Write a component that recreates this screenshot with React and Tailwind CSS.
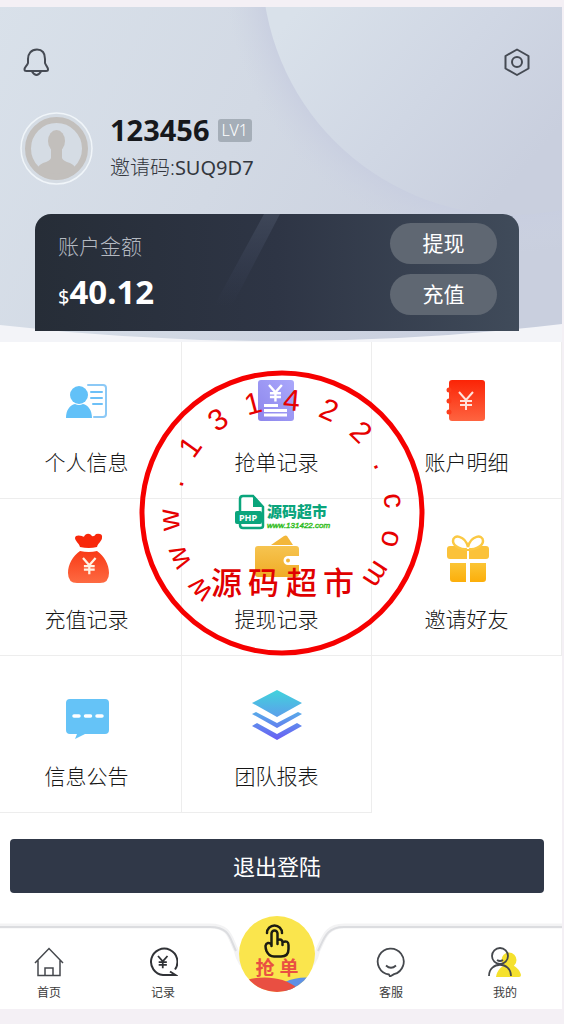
import React from 'react';

const YEN = 'M0 0 L7 8 L14 0 M7 8 V18 M1 9 H13 M1 13 H13';

function ProfileIcon() {
  return (
    <svg viewBox="0 0 52 52" className="size-[52px]" fill="none" aria-hidden="true">
      <g stroke="#8cc9f6" strokeWidth="2" strokeLinecap="round">
        <path d="M27 10H42q3 0 3 3V39q0 3-3 3H33" />
        <path d="M30 17H41M30 23H41M32 29H41" stroke="#6dc0f7" />
      </g>
      <circle cx="18" cy="20" r="9" fill="#62c1f8" />
      <path d="M5 43c0-8 4-13 9-14q4 2 8 0c5 1 9 6 9 14z" fill="#62c1f8" />
    </svg>
  );
}

function OrderIcon() {
  return (
    <svg viewBox="0 0 52 52" className="size-[52px]" fill="none" aria-hidden="true">
      <defs>
        <linearGradient id="order" x1="0" y1="1" x2="1" y2="0">
          <stop offset="0" stopColor="#8d86ec" />
          <stop offset="1" stopColor="#aaa8fb" />
        </linearGradient>
      </defs>
      <rect x="7" y="5" width="36" height="41" rx="3" fill="url(#order)" />
      <path d={YEN} transform="translate(18 10) scale(.92)" stroke="#fff" strokeWidth="2.6" />
      <path d="M13 30.500H27M13 35.500H36M13 40H36" stroke="#fff" strokeWidth="2.800" />
    </svg>
  );
}

function LedgerIcon() {
  return (
    <svg viewBox="0 0 52 52" className="size-[52px]" fill="none" aria-hidden="true">
      <defs>
        <linearGradient id="ledger" x1="0" y1="0" x2="0" y2="1">
          <stop offset="0" stopColor="#fb2406" />
          <stop offset="1" stopColor="#fe6440" />
        </linearGradient>
      </defs>
      <rect x="8" y="5" width="36" height="41" rx="3" fill="url(#ledger)" />
      <g fill="#fc3d1c">
        <circle cx="8" cy="15" r="2.500" />
        <circle cx="8" cy="26" r="2.500" />
        <circle cx="8" cy="37" r="2.500" />
      </g>
      <path d={YEN} transform="translate(18 17)" stroke="#ffe3dc" strokeWidth="2" />
    </svg>
  );
}

function MoneyBagIcon() {
  return (
    <svg viewBox="0 0 52 52" className="size-[52px]" fill="none" aria-hidden="true">
      <defs>
        <linearGradient id="bag" x1="0" y1="0" x2="0" y2="1">
          <stop offset="0" stopColor="#f93a16" />
          <stop offset="1" stopColor="#fd6a42" />
        </linearGradient>
      </defs>
      <path d="M19 15C18 11 14 9 14 6C14 3 18 3 21 4Q23 6 24 3Q28 0 31 4Q33 5 35 2Q42 1 41 6C41 9 37 11 36 15Q28 17 19 15z" fill="#f8270a" />
      <path d="M19 19Q28 21 36 19C43 24 48 32 48 41Q48 51 39 51H16Q7 51 7 41C7 32 12 24 19 19z" fill="url(#bag)" />
      <path d={YEN} transform="translate(22 26) scale(.9)" stroke="#fff3e4" strokeWidth="2.500" />
    </svg>
  );
}

function WalletIcon() {
  return (
    <svg viewBox="0 0 52 52" className="size-[52px]" aria-hidden="true">
      <defs>
        <linearGradient id="wallet" x1="0" y1="0" x2="0" y2="1">
          <stop offset="0" stopColor="#f6c450" />
          <stop offset="1" stopColor="#f0ac26" />
        </linearGradient>
      </defs>
      <path d="M20 13L33 4q2-1 3 0L42 13z" fill="#f3b73a" />
      <path
        d="M7 14H45q3 0 3 3V24H37a4.500 4.500 0 0 0 0 9H48V42q0 3-3 3H7q-3 0-3-3V17q0-3 3-3z"
        fill="url(#wallet)"
      />
      <circle cx="37" cy="28.500" r="2" fill="#f3b73a" />
    </svg>
  );
}

function GiftIcon() {
  return (
    <svg viewBox="0 0 52 52" className="size-[52px]" aria-hidden="true">
      <defs>
        <linearGradient id="gift" x1="0" y1="0" x2="0" y2="1">
          <stop offset="0" stopColor="#fbc535" />
          <stop offset="1" stopColor="#fcae0a" />
        </linearGradient>
      </defs>
      <path d="M9 14H45q3 0 3 3V24q0 3-3 3H28V19H26V27H9q-3 0-3-3V17q0-3 3-3z" fill="#fbc23a" />
      <path
        d="M26 17C22 18 12 15 12 9C12 2 24 3 27 15C30 3 42 2 42 9C42 15 32 18 28 17"
        fill="#fff"
        stroke="#fbc944"
        strokeWidth="2.500"
      />
      <path d="M9 31H25V50H12q-3 0-3-3zM29 31H45V47q0 3-3 3H29z" fill="url(#gift)" />
    </svg>
  );
}

function NoticeIcon() {
  return (
    <svg viewBox="0 0 52 52" className="size-[52px]" aria-hidden="true">
      <path d="M9 10H44q4 0 4 4V41q0 4-4 4H24L14 50L16 45H9q-4 0-4-4V14q0-4 4-4z" fill="#65c3f7" />
      <path d="M13 27H18M24.500 27H29.500M36 27H41" stroke="#fff" strokeWidth="3.500" strokeLinecap="round" />
    </svg>
  );
}

function LayersIcon() {
  return (
    <svg viewBox="0 0 52 52" className="size-[52px]" aria-hidden="true">
      <defs>
        <linearGradient id="layers" gradientUnits="userSpaceOnUse" x1="26" y1="1" x2="26" y2="51">
          <stop offset="0" stopColor="#41d3dc" />
          <stop offset=".5" stopColor="#5aa3ea" />
          <stop offset="1" stopColor="#6a5cf4" />
        </linearGradient>
      </defs>
      <path
        d="M26 1L51 14L26 28L1 14zM1 25L5 23L26 34L47 23L51 25L26 39zM1 37L6 34L26 45L46 34L51 37L26 51z"
        fill="url(#layers)"
      />
    </svg>
  );
}

const MENU = [
  { label: '个人信息', Icon: ProfileIcon },
  { label: '抢单记录', Icon: OrderIcon },
  { label: '账户明细', Icon: LedgerIcon },
  { label: '充值记录', Icon: MoneyBagIcon },
  { label: '提现记录', Icon: WalletIcon },
  { label: '邀请好友', Icon: GiftIcon },
  { label: '信息公告', Icon: NoticeIcon },
  { label: '团队报表', Icon: LayersIcon },
];

function HeaderBackdrop() {
  return (
    <svg viewBox="0 0 570 335" preserveAspectRatio="none" className="absolute inset-0 size-full" aria-hidden="true">
      <defs>
        <linearGradient id="sky" x1="0" y1="0" x2="1" y2=".3">
          <stop offset="0" stopColor="#d9e1ea" />
          <stop offset=".5" stopColor="#d2d9e4" />
          <stop offset="1" stopColor="#c9cfde" />
        </linearGradient>
        <linearGradient id="disc" gradientUnits="userSpaceOnUse" x1="290" y1="20" x2="500" y2="200">
          <stop offset="0" stopColor="#d9e1ea" />
          <stop offset=".55" stopColor="#d0d7e4" />
          <stop offset="1" stopColor="#c9cfde" />
        </linearGradient>
        <radialGradient id="discShade">
          <stop offset=".86" stopColor="#c8cee0" stopOpacity=".9" />
          <stop offset="1" stopColor="#cdd3e2" stopOpacity="0" />
        </radialGradient>
        <clipPath id="hero">
          <path d="M0 0H570V317Q285 351 0 317z" />
        </clipPath>
      </defs>
      <g clipPath="url(#hero)">
        <rect width="570" height="335" fill="url(#sky)" />
        <circle cx="520" cy="-42" r="288" fill="url(#discShade)" />
        <circle cx="520" cy="-42" r="250" fill="url(#disc)" />
      </g>
    </svg>
  );
}

function Header() {
  return (
    <header className="relative bg-[#f3f4f8] pt-[41px] pb-[11px]">
      <HeaderBackdrop />
      <div className="relative flex items-center justify-between px-[31px]">
        <button aria-label="消息">
          <svg viewBox="0 0 28 28" className="size-7" fill="none" stroke="#454a53" strokeWidth="2">
            <path d="M14 1.500C8 1.500 5 6 5 11V15C4 18 1.500 19 1.500 21.500Q1.500 23 3.500 23H23Q25 23 25 21.500C25 19 23 18 22 15V11C22 6 20 1.500 14 1.500z" />
            <path d="M9 23.500Q13.500 30.500 18 23.500" />
          </svg>
        </button>
        <button aria-label="设置">
          <svg viewBox="0 0 28 28" className="size-7" fill="none" stroke="#454a53" strokeWidth="2" strokeLinejoin="round">
            <path d="M14 1.500L25.500 8V20.500L14 27L2.500 20.500V8z" />
            <circle cx="14" cy="14" r="5" />
          </svg>
        </button>
      </div>
      <div className="relative mt-9 flex items-start gap-[17px] px-7">
        <svg viewBox="0 0 73 73" className="size-[73px]" aria-hidden="true">
          <defs>
            <clipPath id="face">
              <circle cx="36.500" cy="36.500" r="31" />
            </clipPath>
          </defs>
          <circle cx="36.500" cy="36.500" r="35.500" fill="#d5dce4" stroke="#f0f5f9" strokeWidth="1.500" />
          <g clipPath="url(#face)" fill="#c2bfbc">
            <ellipse cx="36.500" cy="29" rx="8.500" ry="11" />
            <path d="M31 36H42V46Q43 49 50 51Q58 54 60 70H13Q15 54 23 51Q30 49 31 46z" />
          </g>
          <circle cx="36.500" cy="36.500" r="28.500" fill="none" stroke="#c2bfbc" strokeWidth="6" />
        </svg>
        <div>
          <div className="flex items-center gap-2">
            <h1 className="text-[29px] leading-9 font-bold text-[#16181c]">123456</h1>
            <span className="rounded-[3px] bg-[#a5aeb8] px-1 text-[16px] leading-[23px] font-light text-white">LV1</span>
          </div>
          <p className="text-[20px] leading-10 font-light text-[#33373e]">
            邀请码:<span className="font-normal">SUQ9D7</span>
          </p>
        </div>
      </div>
      <section className="relative mx-[43px] mt-[26px] flex h-[117px] justify-between overflow-hidden rounded-t-2xl bg-linear-to-r from-[#262d37] via-[#2e3545] to-[#404b5a] pt-[9px] pr-[22px] pl-[23px]">
        <svg viewBox="0 0 484 117" preserveAspectRatio="none" className="absolute inset-0 size-full" aria-hidden="true">
          <defs>
            <linearGradient id="streak" x1="0" y1="1" x2="0" y2="0">
              <stop offset="0" stopColor="#39415a" stopOpacity="0" />
              <stop offset="1" stopColor="#454e60" stopOpacity=".7" />
            </linearGradient>
          </defs>
          <path d="M229 0H245L197 92H179z" fill="url(#streak)" />
        </svg>
        <div className="relative">
          <p className="text-[21px] leading-[46px] font-light text-[#b4b9c1]">账户金额</p>
          <p className="flex items-baseline leading-[46px] text-white">
            <span className="text-[20px]">$</span>
            <strong className="text-[33px] font-bold">40.12</strong>
          </p>
        </div>
        <div className="relative flex flex-col gap-[10px]">
          <button className="h-[41px] w-[107px] rounded-full bg-[#5f6772] text-[21px] text-white">提现</button>
          <button className="h-[41px] w-[107px] rounded-full bg-[#5f6772] text-[21px] text-white">充值</button>
        </div>
      </section>
    </header>
  );
}

function Menu() {
  return (
    <nav className="grid grid-cols-3 bg-white" aria-label="菜单">
      {MENU.map(({ label, Icon }) => (
        <a
          key={label}
          href="#"
          className="flex h-[157px] flex-col items-center gap-5 border-r border-b border-[#ededed] pt-[33px] text-[#161616]"
        >
          <Icon />
          <span className="text-[21px] leading-[30px] font-light">{label}</span>
        </a>
      ))}
    </nav>
  );
}

function HomeIcon() {
  return (
    <svg viewBox="0 0 30 30" className="size-[30px]" fill="none" stroke="#45484d" strokeWidth="1.500" aria-hidden="true">
      <path d="M1 16L15 1.500L29 16M4 13.500V28.500H26V13.500M11 28V21H19V28" />
    </svg>
  );
}

function RecordIcon() {
  return (
    <svg viewBox="0 0 30 30" className="size-[30px]" fill="none" stroke="#303236" strokeWidth="2" aria-hidden="true">
      <path d="M27 22.500A13.200 13.200 0 1 0 15 28H27.500L22 24.500" />
      <path d={YEN} transform="translate(10 9) scale(.68)" strokeWidth="2.600" />
    </svg>
  );
}

function SupportIcon() {
  return (
    <svg viewBox="0 0 30 30" className="size-[30px]" fill="none" stroke="#45484d" strokeWidth="1.800" aria-hidden="true">
      <path d="M13 27.500A13 13 0 1 1 18 27.200L14 29.500z" />
      <path d="M10 18.500Q15 23 20 18.500" />
    </svg>
  );
}

function MineIcon() {
  return (
    <svg viewBox="0 0 30 30" className="size-[30px] overflow-visible" fill="none" aria-hidden="true">
      <g fill="#f5e12d">
        <circle cx="19" cy="13" r="7.500" />
        <path d="M6 30C7 23 11 20 15 18H22C27 20 30 24 31 28Q31 30 29 30z" />
      </g>
      <g stroke="#45484d" strokeWidth="1.800">
        <circle cx="10" cy="9" r="8" />
        <path d="M7 13Q10 15 13 13M-1 29C-1 14 21 14 21 29" />
      </g>
    </svg>
  );
}

function Tab({ label, Icon }) {
  return (
    <a href="#" className="flex flex-col items-center gap-[6px] pt-[21px] text-[#3c3c3c]">
      <Icon />
      <span className="text-[12px] leading-5">{label}</span>
    </a>
  );
}

function GrabButton() {
  return (
    <a
      href="#"
      className="relative -mt-[10px] flex size-[76px] flex-col items-center justify-self-center overflow-hidden rounded-full bg-[#fae54d] pt-2"
    >
      <svg viewBox="0 0 76 76" className="absolute inset-0 size-full" aria-hidden="true">
        <path d="M46 66Q58 60 76 62V76H46z" fill="#5e91e6" />
        <path d="M8 64C24 59 46 61 58 72V80H8z" fill="#e94f42" />
      </svg>
      <svg
        viewBox="0 0 26 34"
        className="relative h-[34px] w-[26px]"
        fill="none"
        stroke="#1c1c12"
        strokeWidth="2.500"
        strokeLinecap="round"
        strokeLinejoin="round"
        aria-hidden="true"
      >
        <path d="M3 9A7.500 7.500 0 0 1 18 9" />
        <path d="M7.500 22V9.500a3 3 0 0 1 6 0V16Q18 14.500 18.500 18Q24.500 16 24.500 21V25Q24.500 32.500 17 32.500H10Q5 32.500 2.500 27Q0 20 4 19Q6.500 18.500 7.500 21M13.500 16V20M18.500 18V21" />
      </svg>
      <span className="relative text-[19px] leading-5 font-bold text-[#e94f42]">抢 单</span>
    </a>
  );
}

function TabBar() {
  return (
    <nav className="relative mt-[33px] grid h-[83px] grid-cols-5 items-start" aria-label="底部导航">
      <svg viewBox="0 0 570 83" preserveAspectRatio="none" className="absolute inset-0 size-full overflow-visible" aria-hidden="true">
        <g fill="none" strokeLinecap="butt">
          <path
            d="M0 0H218C238 0 238 12 244 24A42 42 0 0 0 326 24C332 12 334 0 352 0H570"
            stroke="#f3f3f4"
            strokeWidth="5"
          />
          <path d="M0 1H218C238 1 238 13 244 25M326 25C332 13 334 1 352 1H570" stroke="#dcdde0" strokeWidth="2" />
        </g>
      </svg>
      <Tab label="首页" Icon={HomeIcon} />
      <Tab label="记录" Icon={RecordIcon} />
      <GrabButton />
      <Tab label="客服" Icon={SupportIcon} />
      <Tab label="我的" Icon={MineIcon} />
    </nav>
  );
}

const SITE = 'www.131422.com';
const ADVANCE = { w: 0.722, '.': 0.278, c: 0.5, o: 0.556, m: 0.833 };

// start point and turn of each letter, set round the inside of the ring
const LETTERS = SITE.split('').map((ch, i) => {
  const deg = -133 + i * 19.7;
  const a = (deg * Math.PI) / 180;
  const half = ((ADVANCE[ch] || 0.556) * 30) / 2;
  return {
    x: 143 + 103 * Math.sin(a) - half * Math.cos(a),
    y: 143 - 103 * Math.cos(a) - half * Math.sin(a),
    deg,
  };
});

function Stamp() {
  return (
    <svg
      viewBox="0 0 286 286"
      className="pointer-events-none absolute top-[370px] left-1/2 size-[286px] -translate-x-1/2"
      aria-hidden="true"
    >
      <circle cx="143" cy="143" r="140" fill="none" stroke="#f60000" strokeWidth="5" />
      <text
        x={LETTERS.map((l) => l.x).join(' ')}
        y={LETTERS.map((l) => l.y).join(' ')}
        rotate={LETTERS.map((l) => l.deg).join(' ')}
        className="fill-[#e60000] font-['Liberation_Sans'] text-[30px]"
      >
        {SITE}
      </text>
      <g>
        <path
          d="M101 142V129q0-3 3-3H114L124 137V156q0 2-3 2H104q-3 0-3-3z"
          fill="#fff"
          stroke="#0aa57c"
          strokeWidth="2.500"
        />
        <path d="M114 125V137H125z" fill="#0aa57c" />
        <rect x="96" y="141" width="27" height="13" rx="2" fill="#0aa57c" />
        <text x="100" y="151" className="fill-white font-['Noto_Sans'] text-[9px] font-bold">PHP</text>
        <text x="128" y="147" className="fill-[#0aa57c] text-[15px] font-black">源码超市</text>
        <text x="128" y="158" className="fill-[#c8f000] stroke-[#25b830] stroke-[0.5px] font-['Liberation_Sans'] text-[8px] italic">
          www.131422.com
        </text>
      </g>
      <text x="72 109 147 184" y="224" className="fill-[#e00000] text-[31px] font-medium">
        源码超市
      </text>
    </svg>
  );
}

export default function App() {
  return (
    <div className="relative min-h-screen overflow-hidden bg-[#f4f0f5] pt-[7px] pr-[2px] font-['Noto_Sans','Noto_Sans_CJK_SC',sans-serif]">
      <main className="-ml-2 bg-white">
        <Header />
        <Menu />
        <div className="px-[18px] pt-[26px]">
          <button className="h-[54px] w-full rounded bg-[#303848] text-[22px] text-white">退出登陆</button>
        </div>
        <TabBar />
      </main>
      <Stamp />
    </div>
  );
}
